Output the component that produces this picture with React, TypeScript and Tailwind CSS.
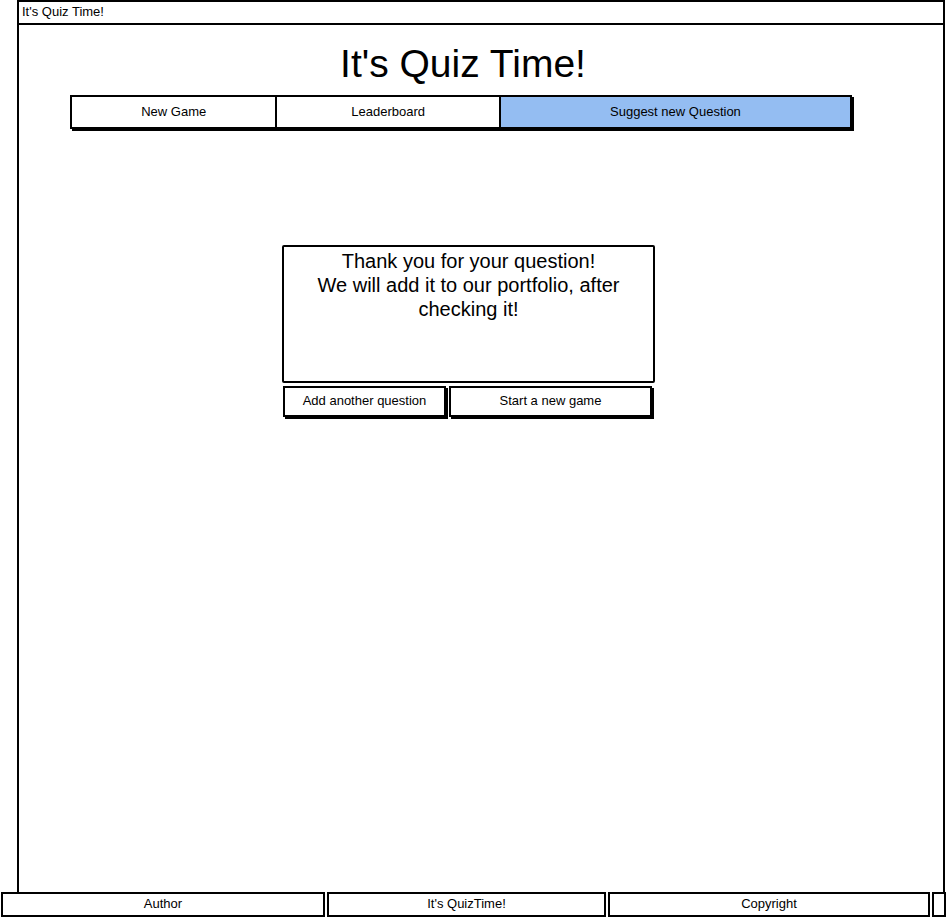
import React from 'react';

const sketch = { fontFamily: '"Liberation Sans", Arial, sans-serif' };

const navItems = [
  { label: 'New Game', width: 'w-[204px]', active: false },
  { label: 'Leaderboard', width: 'w-[224px]', active: false },
  { label: 'Suggest new Question', width: 'w-[352px]', active: true },
];

const footerItems = [
  { label: 'Author', width: 'w-[324px]' },
  { label: "It's QuizTime!", width: 'w-[279px]' },
  { label: 'Copyright', width: 'w-[322px]' },
];

const App = () => {
  return (
    <div className="w-[947px] h-[918px] flex flex-col bg-white text-black overflow-hidden" style={sketch}>
      <div className="ml-[17px] w-[928px] flex-1 flex flex-col border-2 border-b-0 border-black">
        <div className="h-[23px] border-b-2 border-black pl-[3px] text-[13px] leading-[20px]">It's Quiz Time!</div>

        <div className="pl-[51px] flex flex-col">
          <h1 className="w-[786px] text-center text-[39px] leading-[46px] mt-[16px]">It's Quiz Time!</h1>
          <div className="mt-[8px] w-[782px] h-[34px] flex border-2 border-black shadow-[2px_2px_0_#000]">
            {navItems.map((item, i) => (
              <div
                key={item.label}
                className={`${item.width} flex items-center justify-center text-[13px] ${i > 0 ? 'border-l-2 border-black' : ''} ${item.active ? 'bg-[#94bdf2]' : ''}`}
              >
                {item.label}
              </div>
            ))}
          </div>
        </div>

        <div className="ml-[263px] mt-[116px] w-[373px] flex flex-col">
          <div className="h-[138px] border-2 border-black rounded-[2px] text-center text-[20px] leading-[24px] pt-[2px] px-4">
            Thank you for your question!
            <br />
            We will add it to our portfolio, after checking it!
          </div>
          <div className="mt-[3px] flex gap-[3px]">
            <button className="ml-[1px] w-[163px] h-[31px] border-2 border-black shadow-[2px_2px_0_#000] text-[13px] pb-[1px]">
              Add another question
            </button>
            <button className="w-[203px] h-[31px] border-2 border-black shadow-[2px_2px_0_#000] text-[13px] pb-[1px]">
              Start a new game
            </button>
          </div>
        </div>
      </div>

      <div className="h-[26px] flex pl-[1px] pb-[1px]">
        {footerItems.map((item) => (
          <div
            key={item.label}
            className={`${item.width} mr-[2px] border-2 border-black flex items-center justify-center text-[13px] pb-[1px]`}
          >
            {item.label}
          </div>
        ))}
        <div className="w-[14px] border-2 border-black" />
      </div>
    </div>
  );
};

export default App;
